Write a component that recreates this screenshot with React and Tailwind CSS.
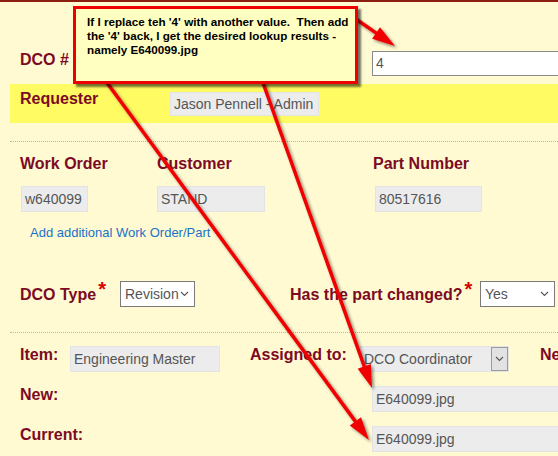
import React from 'react';

const label = "shrink-0 text-[16px] leading-[18px] font-bold text-[#7c0a24]";
const roInput = "shrink-0 h-[26px] bg-[#ececec] border border-[#e3e3e3] px-[3px] text-[14px] leading-[24px] text-[#555] whitespace-nowrap overflow-hidden";

function Chevron() {
    return (
        <svg width="9" height="6" viewBox="0 0 9 6" className="shrink-0">
            <polyline points="1,1 4.5,4.5 8,1" fill="none" stroke="#555" strokeWidth="1.1" />
        </svg>
    );
}

function Star() {
    return <span className="relative -top-[4px] ml-[2px] text-[20px] leading-none text-[#d40000]">*</span>;
}

function Select({ value, className }) {
    return (
        <div className={`shrink-0 flex items-center h-[26px] bg-white border border-[#7a7a7a] pl-[4px] pr-[5px] text-[14px] text-[#555] ${className}`}>
            <span className="flex-1 overflow-hidden whitespace-nowrap">{value}</span>
            <Chevron />
        </div>
    );
}

// red annotation arrow, line plus a filled head
function Arrow({ x1, y1, x2, y2 }) {
    const dx = x2 - x1;
    const dy = y2 - y1;
    const len = Math.hypot(dx, dy);
    const ux = dx / len;
    const uy = dy / len;
    const L = 23;
    const W = 7;
    const bx = x2 - ux * L;
    const by = y2 - uy * L;
    const pts = `${x2},${y2} ${bx - uy * W},${by + ux * W} ${bx + uy * W},${by - ux * W}`;
    return (
        <g filter="url(#shadow)">
            <line x1={x1} y1={y1} x2={bx + ux * 3} y2={by + uy * 3} stroke="#f00000" strokeWidth="3.5" />
            <polygon points={pts} fill="#f00000" />
        </g>
    );
}

export default function App() {
    return (
        <div className="relative w-[558px] h-[456px] overflow-hidden bg-[#fffad2] font-['Liberation_Sans',Arial,sans-serif]">
            <div className="h-[2px] bg-[#8b1d12]" />

            {/* DCO number */}
            <div className="mt-[49px] flex items-start">
                <div className={`${label} w-[372px] pl-[20px]`}>DCO #</div>
                <div className="w-[200px] h-[25px] shrink-0 bg-white border border-[#8a8a8a] px-[3px] text-[14px] leading-[23px] text-[#555]">4</div>
            </div>

            {/* Requester band */}
            <div className="mt-[8px] ml-[10px] h-[39px] bg-[#fffb62] flex items-start pt-[6px] pl-[10px]">
                <div className={`${label} w-[150px]`}>Requester</div>
                <div className={`${roInput} w-[149px] !h-[24px] !leading-[22px] mt-[2px]`}>Jason Pennell - Admin</div>
            </div>

            <div className="mt-[18px] ml-[10px] border-t border-dotted border-[#bdb79c]" />

            {/* Work order / part */}
            <div className="mt-[13px] flex pl-[20px]">
                <div className={`${label} w-[137px]`}>Work Order</div>
                <div className={`${label} w-[216px]`}>Customer</div>
                <div className={label}>Part Number</div>
            </div>
            <div className="mt-[13px] flex pl-[21px]">
                <div className={`${roInput} w-[67px]`}>w640099</div>
                <div className={`${roInput} w-[108px] ml-[69px]`}>STAND</div>
                <div className={`${roInput} w-[107px] ml-[110px]`}>80517616</div>
            </div>
            <div className="mt-[13px] pl-[30px] text-[13px] leading-[15px] text-[#1a72c8]">Add additional Work Order/Part</div>

            {/* type row */}
            <div className="mt-[41px] flex items-start pl-[20px]">
                <div className={`${label} w-[100px] mt-[2px]`}>DCO Type<Star /></div>
                <Select value="Revision" className="w-[75px]" />
                <div className={`${label} w-[190px] ml-[95px] mt-[2px]`}>Has the part changed?<Star /></div>
                <Select value="Yes" className="w-[75px]" />
            </div>

            <div className="mt-[25px] ml-[10px] border-t border-dotted border-[#bdb79c]" />

            {/* item row */}
            <div className="mt-[13px] flex items-start pl-[20px]">
                <div className={`${label} w-[50px]`}>Item:</div>
                <div className={`${roInput} w-[150px]`}>Engineering Master</div>
                <div className={`${label} w-[110px] ml-[30px]`}>Assigned to:</div>
                <div className="flex items-center w-[149px] h-[26px] shrink-0 bg-[#ececec] border border-[#e3e3e3] pl-[3px] text-[14px] text-[#555]">
                    <span className="flex-1 whitespace-nowrap overflow-hidden">DCO Coordinator</span>
                    <div className="w-[17px] h-[24px] flex items-center justify-center bg-[#e2e2e2] border border-[#9a9a9a]">
                        <Chevron />
                    </div>
                </div>
                <div className={`${label} ml-[31px] whitespace-nowrap`}>Ne</div>
            </div>

            <div className="mt-[14px] flex items-start pl-[20px]">
                <div className={`${label} w-[352px]`}>New:</div>
                <div className={`${roInput} w-[200px]`}>E640099.jpg</div>
            </div>
            <div className="mt-[14px] flex items-start pl-[20px]">
                <div className={`${label} w-[352px]`}>Current:</div>
                <div className={`${roInput} w-[200px]`}>E640099.jpg</div>
            </div>

            {/* annotations */}
            <svg className="absolute inset-0 pointer-events-none" width="558" height="456">
                <defs>
                    <filter id="shadow" x="-20%" y="-20%" width="140%" height="140%">
                        <feDropShadow dx="2" dy="2" stdDeviation="1.5" floodColor="#000" floodOpacity="0.45" />
                    </filter>
                </defs>
                <Arrow x1={350} y1={15} x2={395} y2={46} />
                <Arrow x1={105} y1={80} x2={369} y2={440} />
                <Arrow x1={262} y1={80} x2={372} y2={388} />
            </svg>

            <div className="absolute left-[73px] top-[6px] w-[285px] h-[78px] bg-[#ffffc2] border-[3px] border-[#ee0000] shadow-[3px_3px_2px_rgba(0,0,0,0.55)] pl-[11px] pt-[6px] text-[11.7px] leading-[14px] font-bold text-black whitespace-pre">
                If I replace teh '4' with another value.  Then add{'\n'}the '4' back, I get the desired lookup results -{'\n'}namely E640099.jpg
            </div>
        </div>
    );
}
